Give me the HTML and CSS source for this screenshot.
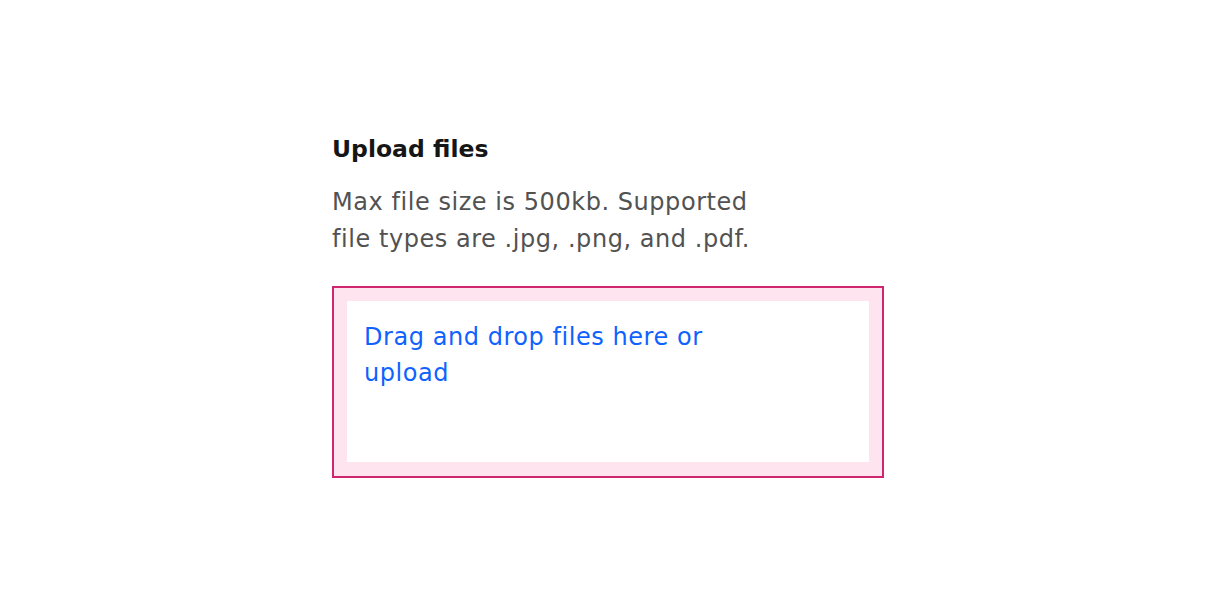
FILE: index.html
```html
<!DOCTYPE html>
<html lang="en">
<head>
<meta charset="utf-8">
<title>Upload files</title>
<link rel="stylesheet" href="styles.css">
</head>
<body>
<main class="page">
  <section class="uploader">
    <h1 class="uploader-title">Upload files</h1>
    <p class="uploader-helper">Max file size is 500kb. Supported file types are .jpg, .png, and .pdf.</p>
    <div class="dropzone">
      <div class="dropzone-inner">
        <span class="dropzone-text">Drag and drop files here or upload</span>
      </div>
    </div>
  </section>
</main>
</body>
</html>
```
FILE: styles.css
```css
html, body {
  margin: 0;
  padding: 0;
  background: #ffffff;
}

.page {
  padding: 131px 0 0 332px;
  font-family: "DejaVu Sans", "Noto Sans", sans-serif;
}

.uploader {
  width: 552px;
}

.uploader-title {
  margin: 0;
  font-size: 23.5px;
  line-height: 36px;
  font-weight: 700;
  color: #161616;
}

.uploader-helper {
  margin: 17px 0 0;
  max-width: 440px;
  font-size: 24px;
  line-height: 37px;
  letter-spacing: 0.55px;
  font-weight: 400;
  color: #525252;
}

.dropzone {
  margin-top: 28px;
  box-sizing: border-box;
  width: 552px;
  height: 192px;
  border: 2px solid #d02670;
  background: #fde4ef;
  padding: 13px 13px 14px 13px;
}

.dropzone-inner {
  box-sizing: border-box;
  height: 100%;
  background: #ffffff;
  padding: 18px 17px;
}

.dropzone-text {
  display: block;
  max-width: 380px;
  font-size: 24px;
  line-height: 36px;
  letter-spacing: 0.55px;
  color: #0f62fe;
}
```
